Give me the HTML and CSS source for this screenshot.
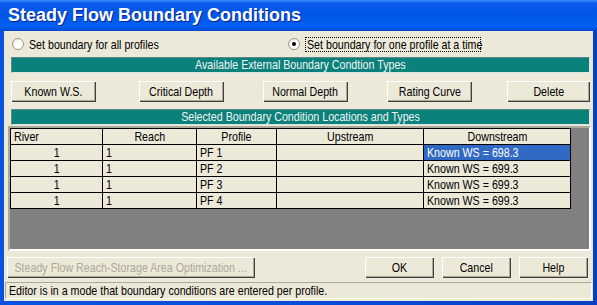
FILE: index.html
```html
<!DOCTYPE html>
<html lang="en">
    <head>
        <meta charset="UTF-8">
        <title>Steady Flow Boundary Conditions</title>
        <link rel="stylesheet" href="styles.css">
    </head>
    <body>
        <div class="window">
            <div class="titlebar">Steady Flow Boundary Conditions</div>
            <div class="client">
                <div class="radios">
                    <label class="radio radio-all"><span class="dot"></span><span class="nar">Set boundary for all profiles</span></label>
                    <label class="radio checked"><span class="dot"></span><span class="focus"><span class="nar">Set boundary for one profile at a time</span></span></label>
                </div>

                <div class="band"><span class="nar">Available External Boundary Condtion Types</span></div>
                <div class="types">
                    <button class="btn"><span class="nar">Known W.S.</span></button>
                    <button class="btn gap-43"><span class="nar">Critical Depth</span></button>
                    <button class="btn gap-39"><span class="nar">Normal Depth</span></button>
                    <button class="btn gap-39"><span class="nar">Rating Curve</span></button>
                    <button class="btn gap-35 last"><span class="nar">Delete</span></button>
                </div>

                <div class="band"><span class="nar">Selected Boundary Condition Locations and Types</span></div>
                <div class="grid">
                    <table>
                        <tr class="head">
                            <td class="col-river left"><span class="nar">River</span></td>
                            <td class="col-reach"><span class="nar">Reach</span></td>
                            <td class="col-profile"><span class="nar">Profile</span></td>
                            <td class="col-up"><span class="nar">Upstream</span></td>
                            <td class="col-down"><span class="nar">Downstream</span></td>
                        </tr>
                        <tr>
                            <td class="center"><span class="nar">1</span></td>
                            <td><span class="nar">1</span></td>
                            <td><span class="nar">PF 1</span></td>
                            <td></td>
                            <td class="selected"><span class="nar">Known WS = 698.3</span></td>
                        </tr>
                        <tr>
                            <td class="center"><span class="nar">1</span></td>
                            <td><span class="nar">1</span></td>
                            <td><span class="nar">PF 2</span></td>
                            <td></td>
                            <td><span class="nar">Known WS = 699.3</span></td>
                        </tr>
                        <tr>
                            <td class="center"><span class="nar">1</span></td>
                            <td><span class="nar">1</span></td>
                            <td><span class="nar">PF 3</span></td>
                            <td></td>
                            <td><span class="nar">Known WS = 699.3</span></td>
                        </tr>
                        <tr>
                            <td class="center"><span class="nar">1</span></td>
                            <td><span class="nar">1</span></td>
                            <td><span class="nar">PF 4</span></td>
                            <td></td>
                            <td><span class="nar">Known WS = 699.3</span></td>
                        </tr>
                    </table>
                </div>

                <div class="actions">
                    <button class="btn btn-wide" disabled><span class="nar">Steady Flow Reach-Storage Area Optimization ...</span></button>
                    <div class="spacer"></div>
                    <button class="btn btn-dlg"><span class="nar">OK</span></button>
                    <button class="btn btn-dlg"><span class="nar">Cancel</span></button>
                    <button class="btn btn-dlg"><span class="nar">Help</span></button>
                </div>

                <div class="status"><span class="nar">Editor is in a mode that boundary conditions are entered per profile.</span></div>
            </div>
        </div>
    </body>
</html>
```

FILE: styles.css
```css
* {
    box-sizing: border-box;
}

body {
    margin: 0;
    background: #ece9d8;
}

.window {
    width: 597px;
    height: 305px;
    display: flex;
    flex-direction: column;
    background: linear-gradient(90deg, #0a52e0, #0a4cd8 50%, #0840c4);
    font-family: "Liberation Sans", Arial, sans-serif;
    font-size: 13px;
    color: #000;
}

/* no narrow font here, so squeeze the sans to arial narrow width */
.nar {
    display: inline-block;
    white-space: nowrap;
    transform: scaleX(0.82);
    transform-origin: left center;
}

.btn .nar,
.band .nar,
.head .nar,
.center .nar {
    transform-origin: center center;
}

.head .left .nar {
    transform-origin: left center;
}

/* title bar, xp luna style */
.titlebar {
    height: 31px;
    line-height: 31px;
    padding-left: 8px;
    font-weight: bold;
    font-size: 18px;
    color: #fff;
    text-shadow: 1px 1px 0 #0a1e8c;
    background: linear-gradient(#3d8cff 0, #0a5ce8 3px, #0056e6 45%, #0060f2 85%, #0048d0 100%);
}

.client {
    flex: 1;
    margin: 0 4px 4px 4px;
    padding: 0 1px 2px 1px;
    background: #ece9d8;
    display: flex;
    flex-direction: column;
}

.radios {
    height: 26px;
    display: flex;
    align-items: center;
}

.radio {
    display: flex;
    align-items: center;
}

.radio-all {
    margin-left: 7px;
    width: 276px;
}

.dot {
    width: 12px;
    height: 12px;
    margin-right: 5px;
    border-radius: 50%;
    border: 1px solid #9d9a8c;
    background: radial-gradient(circle at 65% 65%, #fff 40%, #e2dfd3 100%);
    position: relative;
}

.checked .dot::after {
    content: "";
    position: absolute;
    left: 3px;
    top: 3px;
    width: 4px;
    height: 4px;
    border-radius: 50%;
    background: #000;
}

.focus {
    width: 176px;
    height: 15px;
    padding-left: 1px;
    border: 1px dotted #000;
    line-height: 13px;
}

.band {
    height: 16px;
    margin: 0 2px 0 6px;
    line-height: 14px;
    text-align: center;
    color: #f4f4f4;
    background: #0a817b;
    border: 1px solid;
    border-color: #5d8a86 #d8e6e3 #d8e6e3 #5d8a86;
}

.types {
    height: 21px;
    margin: 8px 2px 7px 6px;
    display: flex;
}

.btn {
    font-family: inherit;
    font-size: 13px;
    color: #000;
    height: 21px;
    padding: 0;
    display: flex;
    align-items: center;
    justify-content: center;
    background: #ece9d8;
    border: none;
    box-shadow: inset 1px 1px #fff, inset -1px -1px #404040, inset -2px -2px #aca899;
}

.types .btn {
    width: 85px;
}

.types .last {
    width: 83px;
}

.gap-43 {
    margin-left: 43px;
}

.gap-39 {
    margin-left: 39px;
}

.gap-35 {
    margin-left: 35px;
}

.grid {
    height: 125px;
    margin: 1px 1px 0 3px;
    background: #808080;
    border: 2px solid;
    border-color: #aca899 #fff #fff #aca899;
}

table {
    border-spacing: 0;
    border-top: 1px solid #000;
    border-left: 1px solid #000;
}

td {
    height: 15px;
    padding: 0 3px;
    line-height: 15px;
    white-space: nowrap;
    background: #ece9d8;
    border-right: 1px solid #000;
    border-bottom: 1px solid #000;
}

.head td {
    text-align: center;
}

.head td.left {
    text-align: left;
}

.col-river {
    width: 92px;
}

.col-reach {
    width: 94px;
}

.col-profile {
    width: 80px;
}

.col-up,
.col-down {
    width: 147px;
}

.center {
    text-align: center;
}

td.selected {
    background: #316ac5;
    color: #fff;
}

.actions {
    height: 21px;
    margin: 6px 4px 0 2px;
    display: flex;
    gap: 8px;
}

.btn-wide {
    width: 248px;
    color: #aca899;
}

.spacer {
    flex: 1;
}

.btn-dlg {
    width: 69px;
}

.status {
    height: 17px;
    margin-top: 4px;
    padding-left: 3px;
    line-height: 16px;
    border: 1px solid;
    border-color: #aca899 #fff #fff #aca899;
}
```
